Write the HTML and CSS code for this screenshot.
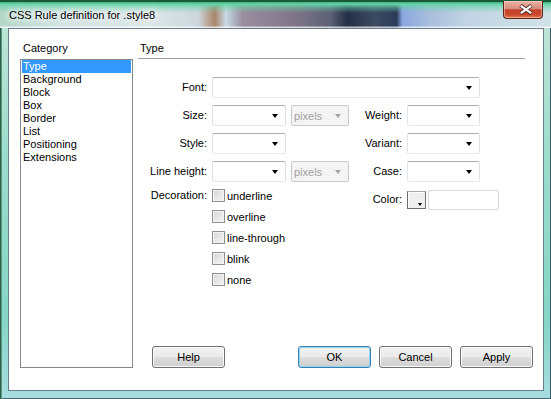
FILE: index.html
```html
<!DOCTYPE html>
<html lang="en">
<head>
    <meta charset="UTF-8">
    <title>CSS Rule definition for .style8</title>
    <link rel="stylesheet" href="styles.css">
</head>
<body>
    <div class="window">
        <div class="titlebar">
            <span class="title">CSS Rule definition for .style8</span>
            <span class="close">
                <svg width="40" height="18" viewBox="0 0 40 18">
                    <path d="M17.5 4.5 L28.5 12.5 M28.5 4.5 L17.5 12.5" stroke="#4b2620" stroke-width="4" fill="none"/>
                    <path d="M17.8 4.8 L28.2 12.2 M28.2 4.8 L17.8 12.2" stroke="#ffffff" stroke-width="2.2" fill="none"/>
                </svg>
            </span>
        </div>

        <div class="client">
            <div class="category">
                <div class="heading">Category</div>
                <ul class="list">
                    <li class="selected">Type</li>
                    <li>Background</li>
                    <li>Block</li>
                    <li>Box</li>
                    <li>Border</li>
                    <li>List</li>
                    <li>Positioning</li>
                    <li>Extensions</li>
                </ul>
            </div>

            <div class="panel">
                <div class="panel-title">Type</div>

                <div class="fields">
                    <label class="lbl">Font:</label>
                    <div class="combo font"><span class="arrow"></span></div>

                    <label class="lbl">Size:</label>
                    <div class="combo"><span class="arrow"></span></div>
                    <div class="combo disabled"><span class="value">pixels</span><span class="arrow"></span></div>
                    <label class="lbl">Weight:</label>
                    <div class="combo"><span class="arrow"></span></div>

                    <label class="lbl">Style:</label>
                    <div class="combo"><span class="arrow"></span></div>
                    <span></span>
                    <label class="lbl">Variant:</label>
                    <div class="combo"><span class="arrow"></span></div>

                    <label class="lbl">Line height:</label>
                    <div class="combo"><span class="arrow"></span></div>
                    <div class="combo disabled"><span class="value">pixels</span><span class="arrow"></span></div>
                    <label class="lbl">Case:</label>
                    <div class="combo"><span class="arrow"></span></div>

                    <div class="decoration">
                        <label class="deco-lbl">Decoration:</label>
                        <div class="checks">
                            <label class="check"><span class="box"></span>underline</label>
                            <label class="check"><span class="box"></span>overline</label>
                            <label class="check"><span class="box"></span>line-through</label>
                            <label class="check"><span class="box"></span>blink</label>
                            <label class="check"><span class="box"></span>none</label>
                        </div>
                    </div>
                    <label class="lbl color-lbl">Color:</label>
                    <div class="color">
                        <span class="swatch"><span class="mini-arrow"></span></span>
                        <span class="color-input"></span>
                    </div>
                </div>

                <div class="buttons">
                    <button class="btn help">Help</button>
                    <button class="btn default">OK</button>
                    <button class="btn">Cancel</button>
                    <button class="btn">Apply</button>
                </div>
            </div>
        </div>
    </div>
</body>
</html>
```

FILE: styles.css
```css
body {
    margin: 0;
    padding: 0;
    font-family: "Liberation Sans", Arial, sans-serif;
    font-size: 11px;
    color: #000;
}

.window {
    width: 551px;
    height: 399px;
    display: flex;
    flex-direction: column;
    box-sizing: border-box;
    background: linear-gradient(to bottom, #c4e6da 0%, #9cdccb 40%, #84d6c6 80%, #a8dde0 100%);
    box-shadow: inset 1px 0 #2f5c46, inset 2px 0 #5a9c80, inset -1px 0 #3d5868, inset 0 -1px #4a6470;
}

/* title bar */
.titlebar {
    height: 28px;
    display: flex;
    align-items: flex-start;
    background:
        linear-gradient(to bottom, #1b5a36 0, #1b5a36 2px, #3fae7e 2px, #66d3a8 4px, rgba(102, 211, 168, 0.45) 8px, rgba(102, 211, 168, 0) 13px, rgba(255, 255, 255, 0) 26px, rgba(255, 255, 255, 0.7) 27px),
        linear-gradient(to right, #b4d6c8 0, #d2e4e4 11%, #dde8ea 27%, #cdd6dc 36%, #a8866a 39%, #c8dbe6 41%, #9a8e9e 44%, #7c7486 54%, #5c6074 60%, #233048 63%, #3c4a62 68%, #2b3a58 72%, #8aa6e0 73%, #a9bedc 78%, #c2d4e4 85%, #d0e2e6 100%);
}

.title {
    padding: 9px 0 0 9px;
    line-height: 13px;
    color: #000;
    text-shadow: 0 0 5px #fff, 0 0 9px #fff, 0 0 12px rgba(255, 255, 255, 0.9);
}

.close {
    margin: 1px 8px 0 auto;
    width: 40px;
    height: 18px;
    box-sizing: border-box;
    border: 1px solid #5c2418;
    border-top: none;
    border-radius: 0 0 4px 4px;
    background: linear-gradient(to bottom, #eab3a6 0%, #d98c7a 45%, #c2412a 52%, #cb4a2e 80%, #e07a4a 100%);
    box-shadow: inset 0 0 0 1px rgba(255, 220, 210, 0.5);
    overflow: hidden;
}

.close svg {
    display: block;
    margin-left: -1px;
}

/* client area */
.client {
    flex: 1;
    margin: 0 7px 8px 8px;
    border: 1px solid #6b7c8c;
    background: #fff;
    display: grid;
    grid-template-columns: 113px 395px;
    column-gap: 5px;
    padding: 13px 10px 22px 11px;
}

.category {
    display: flex;
    flex-direction: column;
}

.heading,
.panel-title {
    line-height: 13px;
    padding-left: 3px;
}

.heading {
    margin-bottom: 4px;
}

.list {
    flex: 1;
    margin: 0;
    padding: 0 1px;
    list-style: none;
    border: 1px solid #828790;
}

.list li {
    line-height: 13px;
    padding-left: 1px;
}

.list li.selected {
    background: #3399ff;
    color: #fff;
}

.panel {
    display: flex;
    flex-direction: column;
}

.panel-title {
    padding: 0 0 3px 2px;
    margin-right: 8px;
    border-bottom: 1px solid #a0a0a0;
}

/* form grid */
.fields {
    margin-top: 18px;
    display: grid;
    grid-template-columns: 69px 74px 58px 48px 73px;
    grid-auto-rows: 21px;
    column-gap: 5px;
    row-gap: 7px;
}

.lbl {
    text-align: right;
    align-self: center;
    line-height: 13px;
    white-space: nowrap;
}

.combo {
    display: flex;
    align-items: center;
    justify-content: flex-end;
    box-sizing: border-box;
    height: 21px;
    padding-right: 7px;
    background: #fff;
    border: 1px solid;
    border-color: #abadb3 #dbdfe6 #e3e9ef #e2e3ea;
    border-radius: 2px;
}

.combo.font {
    grid-column: 2 / 6;
}

.arrow {
    width: 0;
    height: 0;
    border-left: 3.5px solid transparent;
    border-right: 3.5px solid transparent;
    border-top: 4px solid #000;
}

.combo.disabled {
    justify-content: space-between;
    padding-left: 2px;
    background: #f4f4f4;
    border-color: #c9c9c9;
}

.combo.disabled .value {
    color: #a2a2a2;
}

.combo.disabled .arrow {
    border-top-color: #a6a6a6;
}

/* decoration */
.decoration {
    grid-column: 1 / 4;
    grid-row: 5 / span 4;
    display: grid;
    grid-template-columns: 69px auto;
    column-gap: 5px;
    align-items: start;
    margin-top: -1px;
}

.deco-lbl {
    text-align: right;
    line-height: 15px;
    white-space: nowrap;
}

.checks {
    display: flex;
    flex-direction: column;
    gap: 6px;
}

.check {
    display: flex;
    align-items: center;
    gap: 2px;
    height: 15px;
}

.box {
    flex: none;
    width: 13px;
    height: 13px;
    box-sizing: border-box;
    border: 1px solid #8f8f8f;
    background: linear-gradient(135deg, #d6d6d6, #f6f6f6);
    box-shadow: inset 0 0 0 1px #f4f4f4;
}

/* color */
.color-lbl {
    grid-row: 5;
    grid-column: 4;
}

.color {
    grid-row: 5;
    grid-column: 5;
    display: flex;
    align-items: center;
    gap: 2px;
}

.swatch {
    position: relative;
    flex: none;
    width: 19px;
    height: 18px;
    box-sizing: border-box;
    border: 1px solid #6d6d6d;
    border-top-color: #a8a8a8;
    background: #efefef;
    box-shadow: inset 1px 1px #fff;
}

.mini-arrow {
    position: absolute;
    right: 3px;
    bottom: 2px;
    width: 0;
    height: 0;
    border-left: 2.5px solid transparent;
    border-right: 2.5px solid transparent;
    border-top: 3px solid #000;
}

.color-input {
    flex: none;
    width: 71px;
    height: 20px;
    box-sizing: border-box;
    border: 1px solid #d3d8de;
    border-radius: 2px;
    background: #fff;
}

/* buttons */
.buttons {
    margin-top: auto;
    display: flex;
    gap: 8px;
}

.btn {
    width: 73px;
    height: 22px;
    padding: 0;
    font-family: "Liberation Sans", Arial, sans-serif;
    font-size: 11px;
    font-weight: normal;
    color: #000;
    border: 1px solid #707070;
    border-radius: 3px;
    background: linear-gradient(to bottom, #f2f2f2 0%, #ebebeb 48%, #dddddd 52%, #cfcfcf 100%);
    box-shadow: inset 0 0 0 1px #fbfbfb;
}

.btn.help {
    margin-left: 14px;
}

.btn.default {
    margin-left: auto;
    border-color: #3c7fb1;
    box-shadow: inset 0 0 0 1px #8ed6f4;
}
```
